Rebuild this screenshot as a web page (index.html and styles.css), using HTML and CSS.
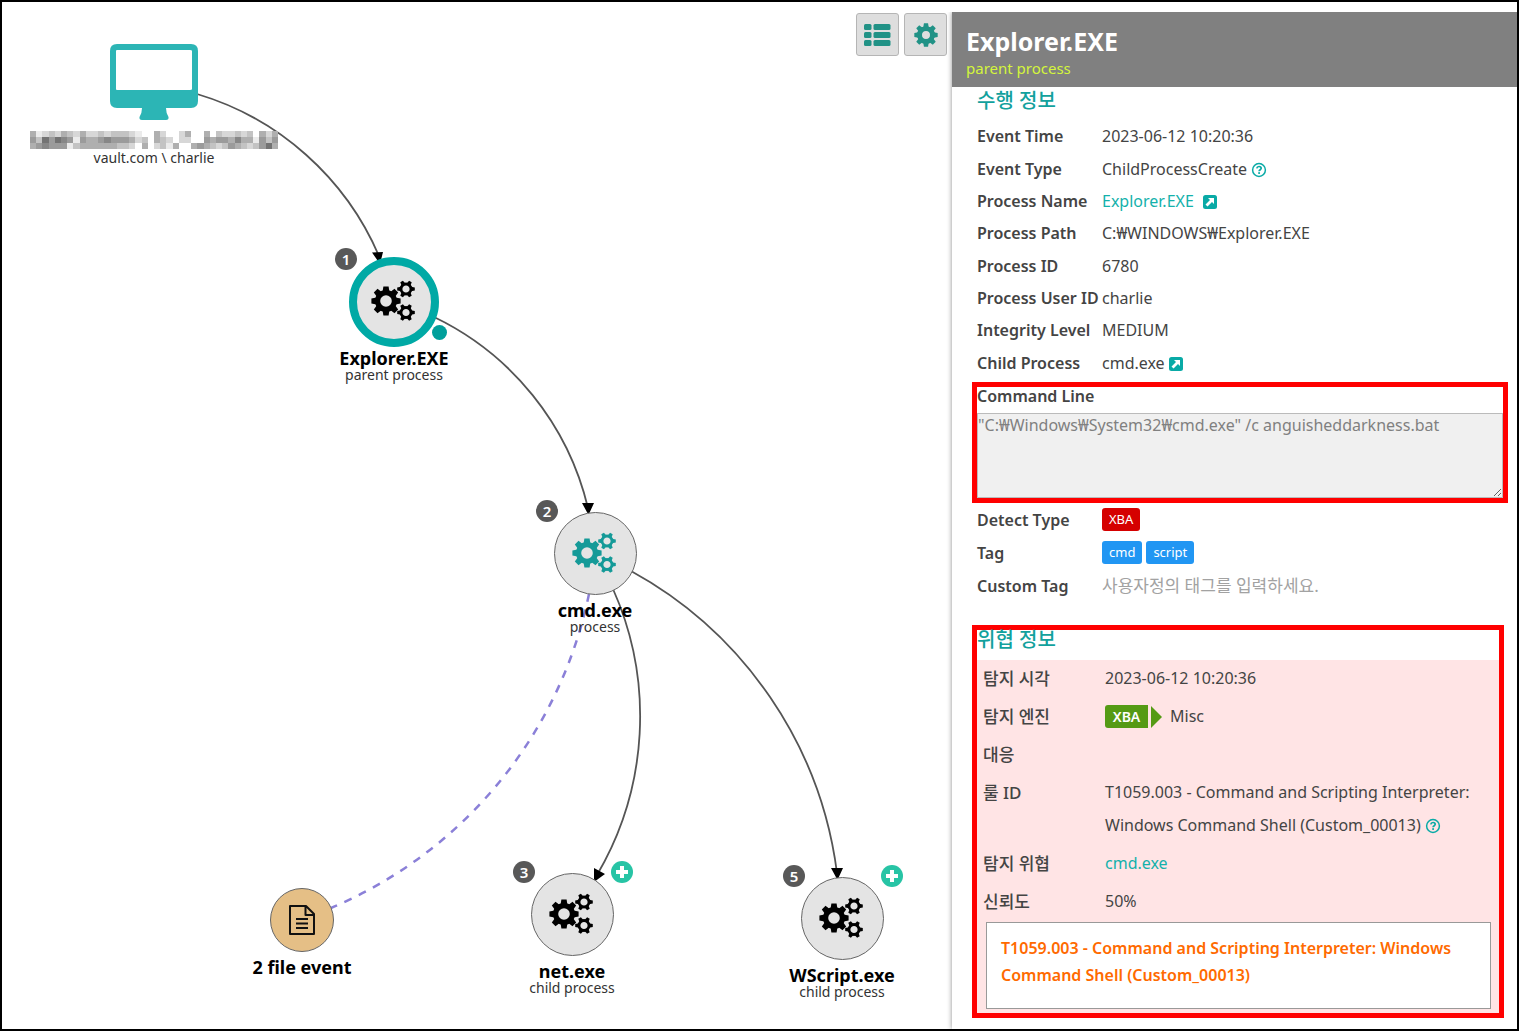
FILE: index.html
```html
<!DOCTYPE html>
<html lang="ko">
<head>
<meta charset="utf-8">
<title>Process tree</title>
<link rel="stylesheet" href="styles.css">
</head>
<body>
<svg class="defs" aria-hidden="true">
  <defs>
    <g id="gear8">
      <circle r="8.4" fill="none" stroke="currentColor" stroke-width="5.2"/>
      <g fill="currentColor">
        <path id="tooth" d="M-3.4-9.5 -2.6-14.6H2.6L3.4-9.5Z"/>
        <use href="#tooth" transform="rotate(45)"/><use href="#tooth" transform="rotate(90)"/>
        <use href="#tooth" transform="rotate(135)"/><use href="#tooth" transform="rotate(180)"/>
        <use href="#tooth" transform="rotate(225)"/><use href="#tooth" transform="rotate(270)"/>
        <use href="#tooth" transform="rotate(315)"/>
      </g>
    </g>
    <g id="gear6">
      <circle r="5" fill="none" stroke="currentColor" stroke-width="2.8"/>
      <g fill="currentColor">
        <path id="tooth6" d="M5-2.2 8.8-1.5V1.5L5 2.2Z"/>
        <use href="#tooth6" transform="rotate(60)"/><use href="#tooth6" transform="rotate(120)"/>
        <use href="#tooth6" transform="rotate(180)"/><use href="#tooth6" transform="rotate(240)"/>
        <use href="#tooth6" transform="rotate(300)"/>
      </g>
    </g>
    <symbol id="gears" viewBox="0 0 46 44">
      <use href="#gear8" x="15" y="21"/><use href="#gear6" x="35" y="9"/><use href="#gear6" x="35" y="32.500"/>
    </symbol>
    <symbol id="help" viewBox="0 0 16 16">
      <circle cx="8" cy="8" r="6.4" fill="none" stroke="currentColor" stroke-width="1.5"/>
      <path d="M5.8 6.3C6 4.9 7 4.5 8 4.5c1.300 0 2.200.7 2.200 1.800C10.200 7.700 8.100 7.700 8.100 9.300" fill="none" stroke="currentColor" stroke-width="1.700"/>
      <rect x="7.200" y="10.200" width="1.800" height="1.700" fill="currentColor"/>
    </symbol>
    <symbol id="open" viewBox="0 0 14 14">
      <rect width="14" height="14" rx="2.500" fill="currentColor"/>
      <path d="M5 3h6v6L9 7l-4.500 4.500-2-2L7 5Z" fill="#fff"/>
    </symbol>
  </defs>
</svg>

<div class="app">
  <main class="graph">
    <svg class="edges" viewBox="0 0 950 1027" width="950" height="1027" aria-hidden="true">
      <g transform="translate(-2 -2)">
        <g fill="none" stroke="#555" stroke-width="1.800">
          <path d="M197 94A287 287 0 0 1 379 256"/>
          <path d="M434 317A285 285 0 0 1 588 508"/>
          <path d="M613 589A313 313 0 0 1 597 875"/>
          <path d="M631 571A403 403 0 0 1 837 873"/>
        </g>
        <path d="M589 594A437 437 0 0 1 331 908" fill="none" stroke="#8b80d8" stroke-width="2.500" stroke-dasharray="8 8"/>
        <path d="M372 252.500 383 252 380 264ZM582 503H594L588.500 515ZM594 868 605 874 594 882ZM831 868H843L837.500 880Z"/>
      </g>
    </svg>

    <div class="toolbar">
      <button class="tool" type="button" aria-label="List view">
        <svg width="27" height="22" viewBox="0 0 27 22" fill="currentColor"><rect y="0" width="7.500" height="6" rx="1.500"/><rect x="9.500" width="17" height="6" rx="1.500"/><rect y="8" width="7.500" height="6" rx="1.500"/><rect x="9.500" y="8" width="17" height="6" rx="1.500"/><rect y="16" width="7.500" height="6" rx="1.500"/><rect x="9.500" y="16" width="17" height="6" rx="1.500"/></svg>
      </button>
      <button class="tool" type="button" aria-label="Settings">
        <svg width="24" height="24" viewBox="-15 -15 30 30"><circle r="8" fill="none" stroke="currentColor" stroke-width="6"/><use href="#gear8"/></svg>
      </button>
    </div>

    <div class="node host">
      <svg width="88" height="76" viewBox="0 0 88 76" fill="#2cb5b5"><path fill-rule="evenodd" d="M7 0H81Q88 0 88 7V57Q88 64 81 64H56Q56 69 58.500 73 59 76 56 76H32Q29 76 29.500 73 32 69 32 64H7Q0 64 0 57V7Q0 0 7 0ZM7 6Q6 6 6 7V45Q6 46 7 46H80Q82 46 82 45V7Q82 6 80 6Z"/></svg>
      <svg class="mosaic" width="248" height="18" viewBox="0 0 40 3" preserveAspectRatio="none" shape-rendering="crispEdges" role="img" aria-label="hidden host name"></svg>
      <span class="kind">vault.com \ charlie</span>
    </div>

    <div class="node explorer">
      <span class="disc selected"><svg width="46" height="44"><use href="#gears"/></svg></span>
      <span class="badge">1</span><span class="dot"></span>
      <b class="name">Explorer.EXE</b><span class="kind">parent process</span>
    </div>
    <div class="node cmd">
      <span class="disc"><svg width="46" height="44"><use href="#gears"/></svg></span>
      <span class="badge">2</span>
      <b class="name">cmd.exe</b><span class="kind">process</span>
    </div>
    <div class="node net">
      <span class="disc"><svg width="46" height="44"><use href="#gears"/></svg></span>
      <span class="badge">3</span>
      <button class="expand" type="button" aria-label="Expand net.exe"></button>
      <b class="name">net.exe</b><span class="kind">child process</span>
    </div>
    <div class="node wscript">
      <span class="disc"><svg width="46" height="44"><use href="#gears"/></svg></span>
      <span class="badge">5</span>
      <button class="expand" type="button" aria-label="Expand WScript.exe"></button>
      <b class="name">WScript.exe</b><span class="kind">child process</span>
    </div>
    <div class="node files">
      <span class="disc file"><svg width="28" height="32" viewBox="0 0 28 32" fill="none" stroke="#111" stroke-width="2"><path d="M2 2H18L26 10V30H2ZM17.500 2V11H26M8 15H20M8 19.500H20M8 24H20" stroke-linejoin="round"/></svg></span>
      <b class="name">2 file event</b>
    </div>
  </main>

  <aside class="panel">
    <header class="panel-head">
      <h1>Explorer.EXE</h1>
      <p>parent process</p>
    </header>
    <div class="panel-body">
      <h2>수행 정보</h2>
      <dl class="info facts">
        <div><dt>Event Time</dt><dd>2023-06-12 10:20:36</dd></div>
        <div><dt>Event Type</dt><dd>ChildProcessCreate <svg class="icon help"><use href="#help"/></svg></dd></div>
        <div><dt>Process Name</dt><dd><a class="wide" href="#">Explorer.EXE</a><svg class="icon"><use href="#open"/></svg></dd></div>
        <div><dt>Process Path</dt><dd>C:₩WINDOWS₩Explorer.EXE</dd></div>
        <div><dt>Process ID</dt><dd>6780</dd></div>
        <div><dt>Process User ID</dt><dd>charlie</dd></div>
        <div><dt>Integrity Level</dt><dd>MEDIUM</dd></div>
        <div><dt>Child Process</dt><dd>cmd.exe <svg class="icon"><use href="#open"/></svg></dd></div>
      </dl>
      <div class="marked command">
        <label for="cmdline">Command Line</label>
        <textarea id="cmdline" readonly>"C:₩Windows₩System32₩cmd.exe" /c anguisheddarkness.bat</textarea>
      </div>
      <dl class="info tags">
        <div><dt>Detect Type</dt><dd><span class="tag red">XBA</span></dd></div>
        <div><dt>Tag</dt><dd><span class="tag">cmd</span><span class="tag">script</span></dd></div>
        <div><dt><label for="custom">Custom Tag</label></dt><dd><input id="custom" type="text" placeholder="사용자정의 태그를 입력하세요."></dd></div>
      </dl>
      <section class="marked threat">
        <h2>위협 정보</h2>
        <div class="alert">
          <dl class="info detections">
            <div><dt>탐지 시각</dt><dd>2023-06-12 10:20:36</dd></div>
            <div><dt>탐지 엔진</dt><dd><span class="engine">XBA</span>Misc</dd></div>
            <div><dt>대응</dt><dd></dd></div>
            <div><dt>룰 ID</dt><dd>T1059.003 - Command and Scripting Interpreter: Windows Command Shell (Custom_00013) <svg class="icon help"><use href="#help"/></svg></dd></div>
            <div><dt>탐지 위협</dt><dd><a href="#">cmd.exe</a></dd></div>
            <div><dt>신뢰도</dt><dd>50%</dd></div>
          </dl>
          <p class="rule">T1059.003 - Command and Scripting Interpreter: Windows Command Shell (Custom_00013)</p>
        </div>
      </section>
    </div>
  </aside>
</div>
<script src="mosaic.js"></script>
</body>
</html>
```
FILE: styles.css
```css
* { box-sizing: border-box; }

body {
  margin: 0;
  font-family: "Noto Sans", "Noto Sans CJK KR", sans-serif;
  font-size: 16px;
  color: #444;
  background: #fff;
}

h1, h2, p, dl, dd { margin: 0; }
button { padding: 0; font: inherit; cursor: pointer; }
a { color: #14b1ab; text-decoration: none; }
.defs { position: absolute; width: 0; height: 0; }

.app {
  display: flex;
  min-height: 100vh;
  border: 2px solid #000;
}

/* Graph canvas */
.graph {
  position: relative;
  flex: 1;
  min-width: 0;
  overflow: hidden;
}
.edges { position: absolute; left: 0; top: 0; }

.toolbar {
  display: flex;
  justify-content: flex-end;
  gap: 5px;
  padding: 11px 5px 0 0;
}
.tool {
  display: flex;
  align-items: center;
  justify-content: center;
  width: 43px;
  height: 43px;
  border: 1px solid #b5b5b5;
  border-radius: 3px;
  background: #dedede;
  color: #219286;
}

.node {
  position: absolute;
  display: flex;
  flex-direction: column;
  align-items: center;
  width: 140px;
  color: #000;
}
.host { left: 27px; top: 42px; width: 250px; }
.explorer { left: 322px; top: 255px; }
.cmd { left: 523px; top: 510px; }
.net { left: 500px; top: 871px; }
.wscript { left: 770px; top: 875px; }
.files { left: 230px; top: 886px; }

.mosaic { margin-top: 11px; }
.host .kind { margin-top: 1px; }

.disc {
  display: flex;
  align-items: center;
  justify-content: center;
  width: 83px;
  height: 83px;
  margin-bottom: 6px;
  border: 1px solid #666;
  border-radius: 50%;
  background: #e4e4e4;
}
.disc.selected {
  width: 90px;
  height: 90px;
  margin-bottom: 2px;
  border: 8px solid #00a9a5;
}
.disc.file {
  width: 64px;
  height: 64px;
  background: #e5bf86;
}
.cmd .disc { color: #159a98; }

.name { font-size: 18px; line-height: 18px; }
.kind { font-size: 14px; line-height: 16px; color: #333; white-space: nowrap; }

.badge, .expand {
  position: absolute;
  top: -12px;
  width: 22px;
  height: 22px;
  border: 0;
  border-radius: 50%;
}
.badge {
  left: 11px;
  background: #585858;
  color: #fff;
  font-size: 15px;
  font-weight: 600;
  line-height: 22px;
  text-align: center;
}
.explorer .badge { top: -9px; }
.expand {
  right: 9px;
  background:
    linear-gradient(#fff, #fff) center / 12px 4px no-repeat,
    linear-gradient(#fff, #fff) center / 4px 12px no-repeat,
    #27c4a5;
}
.dot {
  position: absolute;
  left: 108px;
  top: 68px;
  width: 15px;
  height: 15px;
  border-radius: 50%;
  background: #009f9b;
}

/* Detail panel */
.panel {
  flex: 0 0 565px;
  margin-top: 10px;
  background: #fff;
  box-shadow: 0 0 5px rgba(0, 0, 0, .45);
  clip-path: inset(0 0 0 -8px);
  z-index: 1;
}
.panel-head {
  height: 75px;
  padding: 14px 14px 0;
  background: #808080;
  color: #fff;
}
.panel-head h1 { font-size: 25px; line-height: 30px; }
.panel-head p { font-size: 15px; line-height: 24px; color: #d4f53c; }

.panel-body { padding: 0 9px 0 20px; }
h2 {
  font-size: 20px;
  font-weight: 500;
  line-height: 28px;
  color: #12a19d;
}
.panel-body > h2 { padding: 0 5px 5px; }

.info > div { display: flex; }
.info dt { flex: none; font-weight: 600; white-space: nowrap; }
.info dd { flex: 1; min-width: 0; }

.facts {
  display: grid;
  grid-auto-rows: 1fr;
  min-height: 262px;
  padding: 0 0 3px 5px;
}
.facts > div, .tags > div { align-items: center; }
.facts dt, .tags dt { width: 125px; }

.icon { width: 14px; height: 14px; color: #09aaa6; vertical-align: -2px; }
.icon.help { width: 16px; height: 16px; vertical-align: -3px; }
.wide { margin-right: 9px; }

.marked { border: 5px solid #f00; }

.command label {
  display: block;
  padding-bottom: 8px;
  font-weight: 600;
  line-height: 18px;
}
.command textarea {
  display: block;
  width: 100%;
  height: 85px;
  padding: 0;
  border: 1px solid #bbb;
  background: #f0f0f0;
  color: #808080;
  font: inherit;
  line-height: 22px;
}

.tags { padding-left: 5px; }
.tags > div { height: 33px; }
.tags dd { display: flex; gap: 4px; }
.tag {
  padding: 0 7px;
  border-radius: 3px;
  background: #2196f3;
  color: #fff;
  font-size: 13px;
  line-height: 23px;
}
.tag.red { background: #d50000; }
.tags input {
  width: 100%;
  padding: 0;
  border: 0;
  font: inherit;
  font-size: 17px;
  color: #444;
}
.tags input::placeholder { color: #a2a2a2; }

.threat { margin: 23px 4px 11px 0; }
.threat h2 { line-height: 20px; padding-bottom: 10px; }
.alert { padding: 0 8px 4px 6px; background: #ffe4e5; }
.detections > div { padding: 2px 0 3px; line-height: 33px; }
.detections dt { width: 122px; font-size: 17px; font-weight: 500; }
.engine {
  position: relative;
  display: inline-block;
  width: 43px;
  margin-right: 22px;
  border-radius: 3px 0 0 3px;
  background: #559a14;
  color: #fff;
  font-size: 14px;
  font-weight: 600;
  line-height: 23px;
  text-align: center;
}
.engine::after {
  content: "";
  position: absolute;
  left: 46px;
  top: 1px;
  border: solid transparent;
  border-width: 11px 0 11px 11px;
  border-left-color: #559a14;
}
.rule {
  min-height: 87px;
  margin: 1px 0 0 3px;
  padding: 12px 14px;
  border: 1px solid #999;
  background: #fff;
  color: #ff6a00;
  font-weight: 600;
  line-height: 27px;
}
```
FILE: mosaic.js
```js
// Shade of each tile of the masked host name, 0 = white, 9 = darkest.
const rows = [
  "4123243242232333210042002400403223230424",
  "5375765154456555423043202200545546441535",
  "4565551344444433204023140045432354323574"
];
const svg = document.querySelector(".mosaic");
rows.forEach((row, y) => [...row].forEach((shade, x) => {
  const tile = document.createElementNS("http://www.w3.org/2000/svg", "rect");
  const grey = 255 - shade * 20;
  tile.setAttribute("x", x);
  tile.setAttribute("y", y);
  tile.setAttribute("width", 1);
  tile.setAttribute("height", 1);
  tile.setAttribute("fill", `rgb(${grey},${grey},${grey})`);
  svg.append(tile);
}));
```
